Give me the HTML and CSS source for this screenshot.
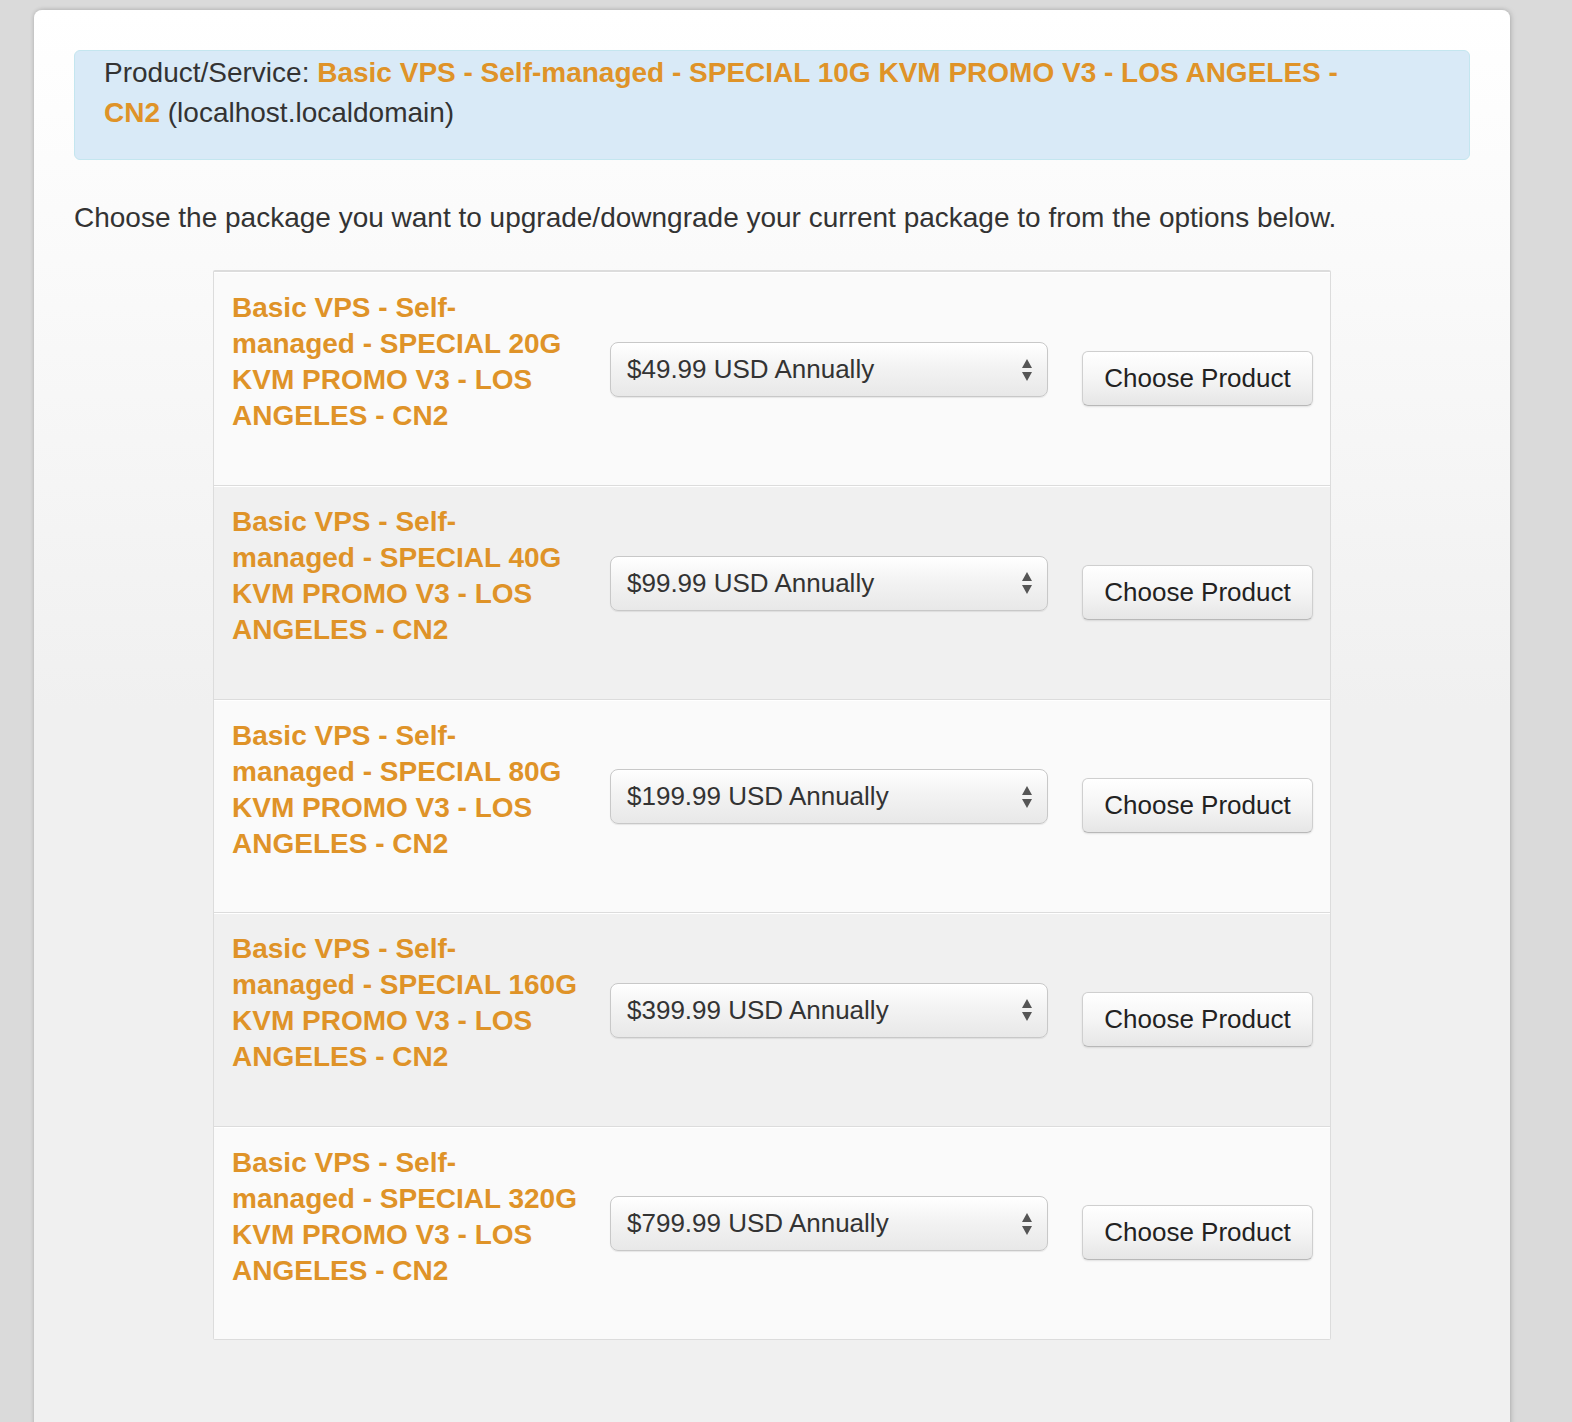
FILE: index.html
```html
<!DOCTYPE html>
<html>
<head>
<meta charset="utf-8">
<link rel="stylesheet" href="styles.css">
</head>
<body>
<div class="page">
  <div class="card">
    <div class="alert">
      Product/Service: <strong class="hl">Basic VPS - Self-managed - SPECIAL 10G KVM PROMO V3 - LOS ANGELES - CN2</strong> (localhost.localdomain)
    </div>
    <p class="intro">Choose the package you want to upgrade/downgrade your current package to from the options below.</p>
    <div class="table">
      <div class="row odd">
        <div class="name">Basic VPS - Self-<br>managed - SPECIAL 20G<br>KVM PROMO V3 - LOS<br>ANGELES - CN2</div>
        <div class="sel-cell"><div class="select"><span>$49.99 USD Annually</span><svg class="arrows" width="12" height="24" viewBox="0 0 12 24"><path d="M6 1 L11 10 L1 10 Z M6 23 L11 14 L1 14 Z" fill="#555"/></svg></div></div>
        <div class="btn-cell"><button class="btn">Choose Product</button></div>
      </div>
      <div class="row even">
        <div class="name">Basic VPS - Self-<br>managed - SPECIAL 40G<br>KVM PROMO V3 - LOS<br>ANGELES - CN2</div>
        <div class="sel-cell"><div class="select"><span>$99.99 USD Annually</span><svg class="arrows" width="12" height="24" viewBox="0 0 12 24"><path d="M6 1 L11 10 L1 10 Z M6 23 L11 14 L1 14 Z" fill="#555"/></svg></div></div>
        <div class="btn-cell"><button class="btn">Choose Product</button></div>
      </div>
      <div class="row odd">
        <div class="name">Basic VPS - Self-<br>managed - SPECIAL 80G<br>KVM PROMO V3 - LOS<br>ANGELES - CN2</div>
        <div class="sel-cell"><div class="select"><span>$199.99 USD Annually</span><svg class="arrows" width="12" height="24" viewBox="0 0 12 24"><path d="M6 1 L11 10 L1 10 Z M6 23 L11 14 L1 14 Z" fill="#555"/></svg></div></div>
        <div class="btn-cell"><button class="btn">Choose Product</button></div>
      </div>
      <div class="row even">
        <div class="name">Basic VPS - Self-<br>managed - SPECIAL 160G<br>KVM PROMO V3 - LOS<br>ANGELES - CN2</div>
        <div class="sel-cell"><div class="select"><span>$399.99 USD Annually</span><svg class="arrows" width="12" height="24" viewBox="0 0 12 24"><path d="M6 1 L11 10 L1 10 Z M6 23 L11 14 L1 14 Z" fill="#555"/></svg></div></div>
        <div class="btn-cell"><button class="btn">Choose Product</button></div>
      </div>
      <div class="row odd">
        <div class="name">Basic VPS - Self-<br>managed - SPECIAL 320G<br>KVM PROMO V3 - LOS<br>ANGELES - CN2</div>
        <div class="sel-cell"><div class="select"><span>$799.99 USD Annually</span><svg class="arrows" width="12" height="24" viewBox="0 0 12 24"><path d="M6 1 L11 10 L1 10 Z M6 23 L11 14 L1 14 Z" fill="#555"/></svg></div></div>
        <div class="btn-cell"><button class="btn">Choose Product</button></div>
      </div>
    </div>
  </div>
</div>
</body>
</html>
```
FILE: styles.css
```css
html, body {
  margin: 0;
  padding: 0;
  height: 100%;
  overflow: hidden;
}
body {
  background: #dadada;
  font-family: "Liberation Sans", Arial, Helvetica, sans-serif;
  color: #333;
}
.page {
  padding: 10px 0 0 34px;
}
.card {
  width: 1476px;
  min-height: 1500px;
  box-sizing: border-box;
  padding: 40px 40px 0 40px;
  background: linear-gradient(to bottom, #ffffff 0px, #fafafa 250px, #f0f0f0 700px, #f0f0f0 100%);
  border-radius: 8px 8px 0 0;
  box-shadow: 0 0 4px rgba(0,0,0,0.18), 2px 0 6px rgba(0,0,0,0.08);
}
.alert {
  background: #d9eaf7;
  border: 1px solid #c4e6ef;
  border-radius: 6px;
  padding: 2px 70px 26px 29px;
  font-size: 28px;
  line-height: 40px;
  color: #333;
}
.hl {
  color: #df9328;
  font-weight: bold;
}
.intro {
  margin: 38px 0 0 0;
  font-size: 28px;
  line-height: 40px;
  color: #333;
}
.table {
  width: 1116px;
  margin: 32px auto 0 auto;
  border: 1px solid #dcdcdc;
  border-top: 2px solid #dcdcdc;
  border-radius: 2px;
}
.row {
  display: flex;
  align-items: center;
  height: 213.5px;
  box-sizing: border-box;
  border-top: 1px solid #dcdcdc;
  box-shadow: inset 0 1px 0 #ffffff;
}
.row:first-child {
  border-top: none;
  height: 213px;
}
.row.odd { background: #fafafa; }
.row.even { background: #f0f0f0; }
.name {
  align-self: flex-start;
  width: 360px;
  padding: 18px 0 0 18px;
  font-size: 28px;
  line-height: 36px;
  font-weight: bold;
  color: #df9328;
  white-space: nowrap;
}
.sel-cell {
  margin-left: 18px;
  margin-bottom: 18px;
}
.select {
  width: 438px;
  height: 55px;
  box-sizing: border-box;
  border: 1px solid #c8c8c8;
  border-radius: 8px;
  background: linear-gradient(to bottom, #ffffff 0%, #f3f3f3 45%, #e8e8e8 100%);
  box-shadow: 0 1px 1px rgba(0,0,0,0.08), inset 0 1px 0 #fff;
  display: flex;
  align-items: center;
  justify-content: space-between;
  padding: 0 14px 0 16px;
  font-size: 26px;
  color: #333;
}
.arrows { display: block; }
.btn-cell {
  margin-left: 34px;
}
.btn {
  width: 231px;
  height: 55px;
  box-sizing: border-box;
  border: 1px solid #cfcfcf;
  border-bottom-color: #b8b8b8;
  border-radius: 6px;
  background: linear-gradient(to bottom, #ffffff 0%, #f5f5f5 50%, #e6e6e6 100%);
  box-shadow: 0 1px 2px rgba(0,0,0,0.1);
  font-family: "Liberation Sans", Arial, Helvetica, sans-serif;
  font-size: 26px;
  color: #222;
  padding: 0;
}
```
